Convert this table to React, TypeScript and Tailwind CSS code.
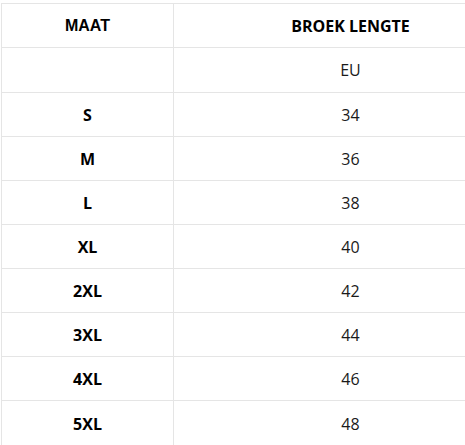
const rows: [string, string][] = [
  ["S", "34"],
  ["M", "36"],
  ["L", "38"],
  ["XL", "40"],
  ["2XL", "42"],
  ["3XL", "44"],
  ["4XL", "46"],
  ["5XL", "48"],
];

export default function App() {
  return (
    <div className="h-[445px] w-[465px] overflow-hidden bg-white pl-px pt-[3px]">
      <div className="w-[527px] shrink-0">
        <table className="w-full table-fixed border-collapse text-[16px] text-[#1a1a1a]">
          <colgroup>
            <col className="w-[172px]" />
            <col />
          </colgroup>
          <tbody>
            <tr className="h-[44px]">
              <td className="border border-[#e5e5e5] text-center font-['Liberation_Sans',Arial,sans-serif] font-bold text-black">
                MAAT
              </td>
              <td className="border border-[#e5e5e5] text-center font-['Open_Sans',sans-serif] font-bold text-black">
                BROEK LENGTE
              </td>
            </tr>
            <tr className="h-[45px]">
              <td className="border border-[#e5e5e5]" />
              <td className="border border-[#e5e5e5] text-center font-['Open_Sans',sans-serif]">
                EU
              </td>
            </tr>
            {rows.map(([size, length], i) => (
              <tr key={size} className={i === rows.length - 1 ? "h-[46px]" : "h-[44px]"}>
                <td className="border border-[#e5e5e5] text-center font-['Open_Sans',sans-serif] font-bold text-black">
                  {size}
                </td>
                <td className="border border-[#e5e5e5] text-center font-['Open_Sans',sans-serif]">
                  {length}
                </td>
              </tr>
            ))}
          </tbody>
        </table>
      </div>
    </div>
  );
}
